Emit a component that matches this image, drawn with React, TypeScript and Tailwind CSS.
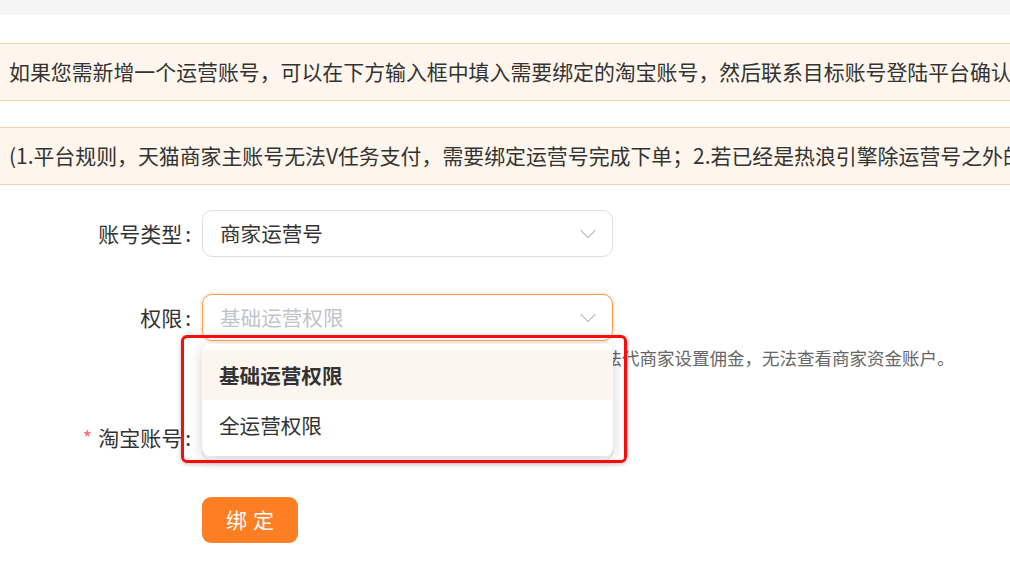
import React from 'react'

const font = { fontFamily: '"Noto Sans CJK SC", "Noto Sans", sans-serif' }

function Chevron() {
  return (
    <svg width="16" height="10" viewBox="0 0 16 10" fill="none" className="shrink-0">
      <path d="M1 1.5 L8 8.5 L15 1.5" stroke="#c0c4cc" strokeWidth="1.4" strokeLinecap="round" strokeLinejoin="round" />
    </svg>
  )
}

function Label({ text, required }: { text: string; required?: boolean }) {
  return (
    <div className="w-[191px] shrink-0 flex justify-end items-center text-[21px] text-[#333]">
      {required && <span className="text-[#f56c6c] mr-[6px] text-[20px]">*</span>}
      <span>{text}</span>
      <span className="ml-[3px]">:</span>
    </div>
  )
}

export default function App() {
  return (
    <div className="relative w-[1010px] h-[565px] overflow-hidden bg-white" style={font}>
      <div className="h-[15px] bg-[#f5f5f5]" />

      <div className="mt-[28px] h-[58px] border-y border-[#fbd3a4] bg-[#fef6ec] pl-[9px] flex items-center whitespace-nowrap text-[20.9px] text-[#333]">
        如果您需新增一个运营账号，可以在下方输入框中填入需要绑定的淘宝账号，然后联系目标账号登陆平台确认绑定。
      </div>
      <div className="mt-[26px] h-[58px] border-y border-[#fbd3a4] bg-[#fef6ec] pl-[9px] flex items-center whitespace-nowrap text-[20.9px] text-[#333]">
        (1.平台规则，天猫商家主账号无法V任务支付，需要绑定运营号完成下单；2.若已经是热浪引擎除运营号之外的账号，无法绑定)
      </div>

      <div className="mt-[25px] flex items-center">
        <Label text="账号类型" />
        <div className="ml-[11px] w-[411px] h-[47px] rounded-[10px] border border-[#dcdfe6] flex items-center justify-between pl-[17px] pr-[16px] text-[20.6px] text-[#333]">
          <span>商家运营号</span>
          <Chevron />
        </div>
      </div>

      <div className="mt-[37px] flex items-center">
        <Label text="权限" />
        <div className="ml-[11px] w-[411px] h-[47px] rounded-[10px] border border-[#fd9a4f] shadow-[0_0_0_2px_rgba(253,154,79,0.15)] flex items-center justify-between pl-[17px] pr-[16px] text-[20.6px] text-[#c0c4cc]">
          <span>基础运营权限</span>
          <Chevron />
        </div>
      </div>
      <div className="ml-[202px] mt-[5px] h-[25px] flex items-center whitespace-nowrap text-[17.5px] text-[#666]">
        基础运营权限：可发布和管理任务、可查看订单，无法代商家设置佣金，无法查看商家资金账户。
      </div>

      <div className="mt-[43px] flex items-center">
        <Label text="淘宝账号" required />
        <div className="ml-[11px] w-[411px] h-[47px] rounded-[10px] border border-[#dcdfe6]" />
      </div>

      <div className="mt-[36px] ml-[202px]">
        <button className="w-[96px] h-[46px] rounded-[9px] bg-[#fd7e23] text-white text-[21px] tracking-[6px] pl-[6px]">
          绑定
        </button>
      </div>

      {/* dropdown popper */}
      <div className="absolute left-[202px] top-[344px] w-[411px] py-[6px] bg-white rounded-[8px] shadow-[0_3px_14px_rgba(0,0,0,0.18)]">
        <div className="h-[50px] flex items-center pl-[17px] bg-[#fdf6ee] text-[20.6px] font-bold text-[#333]">基础运营权限</div>
        <div className="h-[50px] flex items-center pl-[17px] text-[20.6px] text-[#333]">全运营权限</div>
      </div>

      {/* annotation */}
      <div className="absolute left-[181px] top-[335px] w-[446px] h-[128px] border-[3.5px] border-[#ff0a0a] rounded-[6px] shadow-[0_1px_4px_rgba(0,0,0,0.25)]" />
    </div>
  )
}
